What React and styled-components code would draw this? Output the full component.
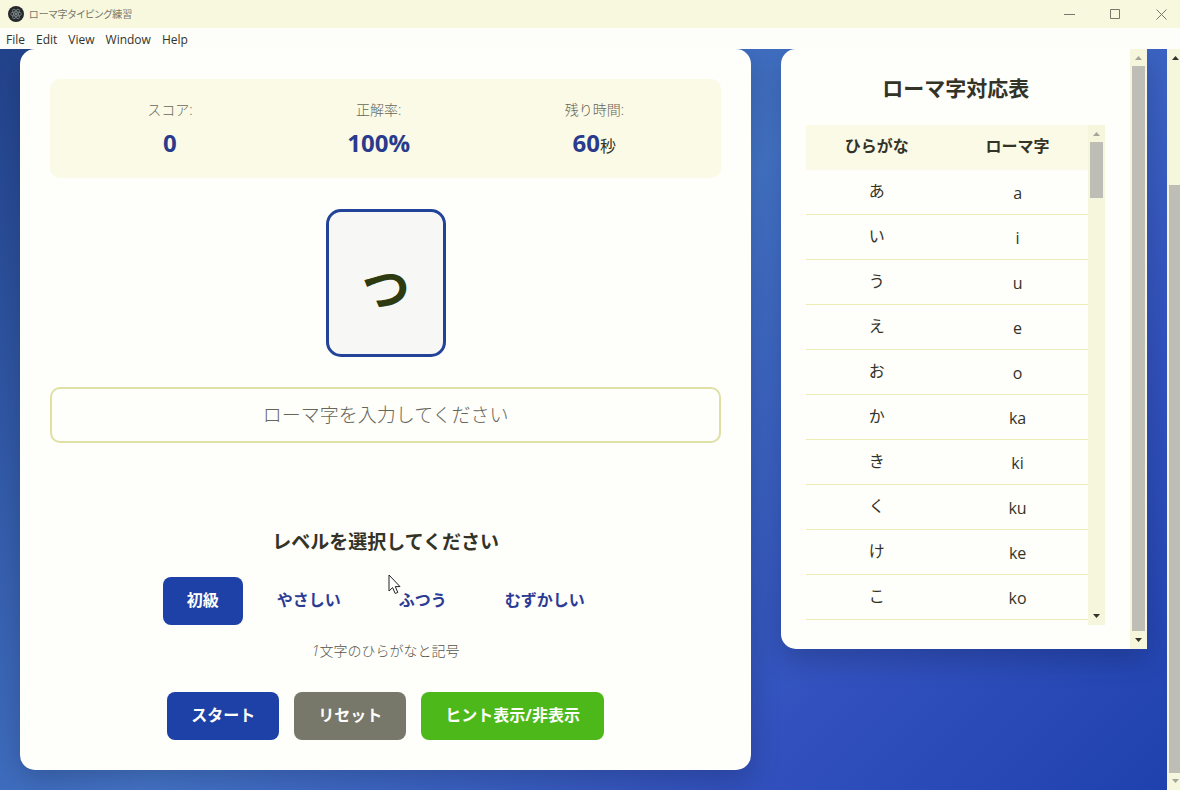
import React, { useState } from "react";
import styled, { createGlobalStyle, css } from "styled-components";

const GlobalStyle = createGlobalStyle`
  *, *::before, *::after { box-sizing: border-box; }
  html, body, #root { height: 100%; }
  body {
    margin: 0;
    overflow: hidden;
    color: #333328;
    font-family: "Open Sans", "Noto Sans CJK JP", sans-serif;
    font-size: 16px;
    line-height: 24px;
  }
  h2, h3, p, dl, dt, dd { margin: 0; }
  button, input { font: inherit; }
`;

const Window = styled.div`
  display: flex;
  flex-direction: column;
  height: 100vh;
`;

const TitleBar = styled.header`
  display: flex;
  align-items: center;
  gap: 5px;
  flex: none;
  height: 28px;
  padding: 0 12px 0 8px;
  background: #f8f8de;
`;

const WindowTitle = styled.span`
  flex: 1;
  color: #77776c;
  font-family: "Noto Sans CJK JP", sans-serif;
  font-size: 10px;
  font-feature-settings: "palt";
`;

const WindowButtons = styled.div`
  display: flex;
  gap: 31px;
`;

const WindowButton = styled.button`
  display: flex;
  padding: 0;
  border: 0;
  background: none;
  color: #77776c;
`;

const MenuBar = styled.nav`
  display: flex;
  gap: 11px;
  flex: none;
  height: 21px;
  padding: 0 6px;
  background: #fdfdfa;
`;

const MenuItem = styled.button`
  padding: 0;
  border: 0;
  background: none;
  color: #33332a;
  font-size: 12px;
  line-height: 24px;
`;

const Viewport = styled.div`
  display: flex;
  flex: 1;
  min-height: 0;
  overflow: hidden;
  background: #1e40af;
`;

const Page = styled.main`
  display: grid;
  grid-template-columns: minmax(0, 2fr) minmax(0, 1fr);
  align-items: start;
  gap: 30px;
  flex: 1;
  min-width: 0;
  padding: 0 20px 20px;
  background: linear-gradient(135deg, #1e3c84 -6%, #4474c8 46%, #3352bf 76%, #1f41ae 100%);
`;

const Card = styled.section`
  background: #fefefb;
  border-radius: 15px;
  box-shadow: 0 10px 30px rgba(0, 0, 0, 0.2);
`;

const GameCard = styled(Card)`
  display: flex;
  flex-direction: column;
  align-items: center;
  padding: 30px;
`;

const Stats = styled.dl`
  display: flex;
  justify-content: space-around;
  align-self: stretch;
  padding: 20px;
  border-radius: 10px;
  background: #fafae6;
`;

const Stat = styled.div`
  text-align: center;
`;

const StatLabel = styled.dt`
  color: #66665a;
  font-size: 14px;
  font-weight: 300;
  line-height: 22px;
`;

const StatValue = styled.dd`
  height: 37px;
  padding-top: 6px;
  line-height: 32px;

  strong {
    color: #2a3a8c;
    font-size: 24px;
  }
`;

const KanaCard = styled.div`
  display: flex;
  align-items: center;
  justify-content: center;
  flex: none;
  width: 120px;
  height: 148px;
  margin-top: 31px;
  padding-top: 10px;
  border: 3px solid #234398;
  border-radius: 15px;
  background: #f7f8f6;
  color: #2e3a10;
  font-size: 48px;
  font-weight: 700;
  line-height: 72px;
`;

const AnswerInput = styled.input`
  align-self: stretch;
  height: 56px;
  margin-top: 30px;
  padding: 0 15px;
  border: 2px solid #dfe0a4;
  border-radius: 10px;
  background: #fefefb;
  color: #333328;
  font-size: 19px;
  text-align: center;
  outline: none;

  &::placeholder {
    color: #66665a;
    font-weight: 300;
    opacity: 1;
  }
`;

const LevelHeading = styled.h3`
  margin-top: 84px;
  font-size: 19px;
  line-height: 30px;
`;

const ButtonRow = styled.div`
  display: flex;
  justify-content: center;
  gap: ${({ $gap }) => $gap}px;
  margin-top: ${({ $top }) => $top}px;
`;

const tones = {
  primary: "#1d41a6",
  secondary: "#77776a",
  success: "#4cb81a",
};

const Button = styled.button`
  height: 48px;
  padding: 0 24px 2px;
  border: 0;
  border-radius: 8px;
  background: ${({ $tone }) => tones[$tone] || "transparent"};
  color: #fefefb;
  font-weight: 700;
  white-space: nowrap;
  cursor: pointer;

  ${({ $tone }) =>
    !$tone &&
    css`
      color: #2c3b94;
    `}
`;

const LevelNote = styled.p`
  margin-top: 14px;
  color: #55554a;
  font-size: 14px;
  font-style: italic;
  font-weight: 300;

  span {
    font-style: normal;
  }
`;

const ChartCard = styled(Card)`
  display: flex;
  height: 600px;
  border-radius: 15px 0 0 15px;
  overflow: hidden;
`;

const ChartBody = styled.div`
  flex: 1;
  min-width: 0;
  padding: 24px 25px;
`;

const ChartHeading = styled.h2`
  margin-bottom: 22px;
  font-size: 21px;
  line-height: 30px;
  text-align: center;
`;

const TableFrame = styled.div`
  display: flex;
  height: 500px;
  overflow: hidden;
`;

const TableClip = styled.div`
  flex: 1;
  height: 100%;
  overflow: hidden;
`;

const KanaTable = styled.table`
  width: 100%;
  border-collapse: separate;
  border-spacing: 0;
  table-layout: fixed;
  text-align: center;

  th, td {
    height: 45px;
    padding: 0;
  }

  th {
    padding-bottom: 4px;
    background: #fafae6;
  }

  td {
    border-bottom: 1px solid #ececb4;
  }

  td:first-child {
    padding-bottom: 2px;
  }

  td:last-child {
    padding-top: 2px;
  }
`;

const ScrollTrack = styled.div`
  display: flex;
  flex-direction: column;
  align-items: center;
  flex: none;
  width: 17px;
  background: #f6f6dc;
`;

const ScrollArrow = styled.svg`
  display: block;
  flex: none;
  width: 17px;
  height: 17px;
  fill: ${({ $active }) => ($active ? "#33332c" : "#a5a59b")};
`;

const ScrollSpace = styled.div`
  flex: ${({ $grow }) => $grow} 1 0;
`;

const ScrollThumb = styled(ScrollSpace)`
  width: 13px;
  background: #bebeb6;
`;

const PageScroll = styled.div`
  display: flex;
  flex: none;
  width: 13px;
  overflow: hidden;
`;

const Pointer = styled.svg`
  position: absolute;
  top: 574px;
  left: 388px;
  width: 13px;
  height: 21px;
  pointer-events: none;
`;

function Scrollbar({ before, thumb, after, up, down }) {
  return (
    <ScrollTrack aria-hidden="true">
      <ScrollArrow viewBox="0 0 17 17" $active={up}>
        <path d="M5 11 8.5 7 12 11Z" />
      </ScrollArrow>
      <ScrollSpace $grow={before} />
      <ScrollThumb $grow={thumb} />
      <ScrollSpace $grow={after} />
      <ScrollArrow viewBox="0 0 17 17" $active={down}>
        <path d="M5 6 8.5 10 12 6Z" />
      </ScrollArrow>
    </ScrollTrack>
  );
}

function AppLogo() {
  return (
    <svg width="16" height="16" viewBox="0 0 16 16" aria-hidden="true">
      <circle cx="8" cy="8" r="8" fill="#25282b" />
      <g fill="none" stroke="#8b9898" strokeWidth="0.7">
        <ellipse cx="8" cy="8" rx="5.4" ry="2.1" />
        <ellipse cx="8" cy="8" rx="5.4" ry="2.1" transform="rotate(60 8 8)" />
        <ellipse cx="8" cy="8" rx="5.4" ry="2.1" transform="rotate(120 8 8)" />
      </g>
      <circle cx="8" cy="8" r="0.9" fill="#a8b4b4" />
    </svg>
  );
}

const windowControls = [
  { label: "最小化", path: "M0 5.5H11" },
  { label: "最大化", path: "M0.5 0.5H9.5V9.5H0.5Z" },
  { label: "閉じる", path: "M0.5 0.5 10.5 10.5M10.5 0.5 0.5 10.5" },
];

const kana = [
  ["あ", "a"], ["い", "i"], ["う", "u"], ["え", "e"], ["お", "o"],
  ["か", "ka"], ["き", "ki"], ["く", "ku"], ["け", "ke"], ["こ", "ko"],
];

const levels = ["初級", "やさしい", "ふつう", "むずかしい"];

export default function App() {
  const [level, setLevel] = useState("初級");
  const [answer, setAnswer] = useState("");

  return (
    <Window>
      <GlobalStyle />
      <TitleBar>
        <AppLogo />
        <WindowTitle>ローマ字タイピング練習</WindowTitle>
        <WindowButtons>
          {windowControls.map(({ label, path }) => (
            <WindowButton key={label} aria-label={label}>
              <svg width="15" height="11" viewBox="-3 0 15 11" fill="none" stroke="currentColor">
                <path d={path} />
              </svg>
            </WindowButton>
          ))}
        </WindowButtons>
      </TitleBar>
      <MenuBar>
        {["File", "Edit", "View", "Window", "Help"].map((name) => (
          <MenuItem key={name}>{name}</MenuItem>
        ))}
      </MenuBar>
      <Viewport>
        <Page>
          <GameCard>
            <Stats>
              <Stat>
                <StatLabel>スコア:</StatLabel>
                <StatValue><strong>0</strong></StatValue>
              </Stat>
              <Stat>
                <StatLabel>正解率:</StatLabel>
                <StatValue><strong>100%</strong></StatValue>
              </Stat>
              <Stat>
                <StatLabel>残り時間:</StatLabel>
                <StatValue><strong>60</strong>秒</StatValue>
              </Stat>
            </Stats>
            <KanaCard>つ</KanaCard>
            <AnswerInput
              aria-label="ローマ字"
              placeholder="ローマ字を入力してください"
              value={answer}
              onChange={(event) => setAnswer(event.target.value)}
            />
            <LevelHeading>レベルを選択してください</LevelHeading>
            <ButtonRow $gap={10} $top={20}>
              {levels.map((name) => (
                <Button
                  key={name}
                  $tone={name === level ? "primary" : undefined}
                  aria-pressed={name === level}
                  onClick={() => setLevel(name)}
                >
                  {name}
                </Button>
              ))}
            </ButtonRow>
            <LevelNote>1<span>文字のひらがなと記号</span></LevelNote>
            <ButtonRow $gap={15} $top={29}>
              <Button $tone="primary">スタート</Button>
              <Button $tone="secondary">リセット</Button>
              <Button $tone="success">ヒント表示/非表示</Button>
            </ButtonRow>
          </GameCard>
          <ChartCard>
            <ChartBody>
              <ChartHeading>ローマ字対応表</ChartHeading>
              <TableFrame>
                <TableClip>
                  <KanaTable>
                    <thead>
                      <tr>
                        <th scope="col">ひらがな</th>
                        <th scope="col">ローマ字</th>
                      </tr>
                    </thead>
                    <tbody>
                      {kana.map(([hiragana, romaji]) => (
                        <tr key={romaji}>
                          <td>{hiragana}</td>
                          <td>{romaji}</td>
                        </tr>
                      ))}
                    </tbody>
                  </KanaTable>
                </TableClip>
                <Scrollbar before={0} thumb={56} after={410} down />
              </TableFrame>
            </ChartBody>
            <Scrollbar before={0} thumb={565} after={1} down />
          </ChartCard>
        </Page>
        <PageScroll>
          <Scrollbar before={119} thumb={588} after={0} up />
        </PageScroll>
      </Viewport>
      <Pointer viewBox="0 0 13 21" aria-hidden="true">
        <path d="M1 1V17L4.6 13.6 7.2 19.5 9.8 18.4 7.3 12.6H12Z" fill="#fff" stroke="#222" />
      </Pointer>
    </Window>
  );
}
